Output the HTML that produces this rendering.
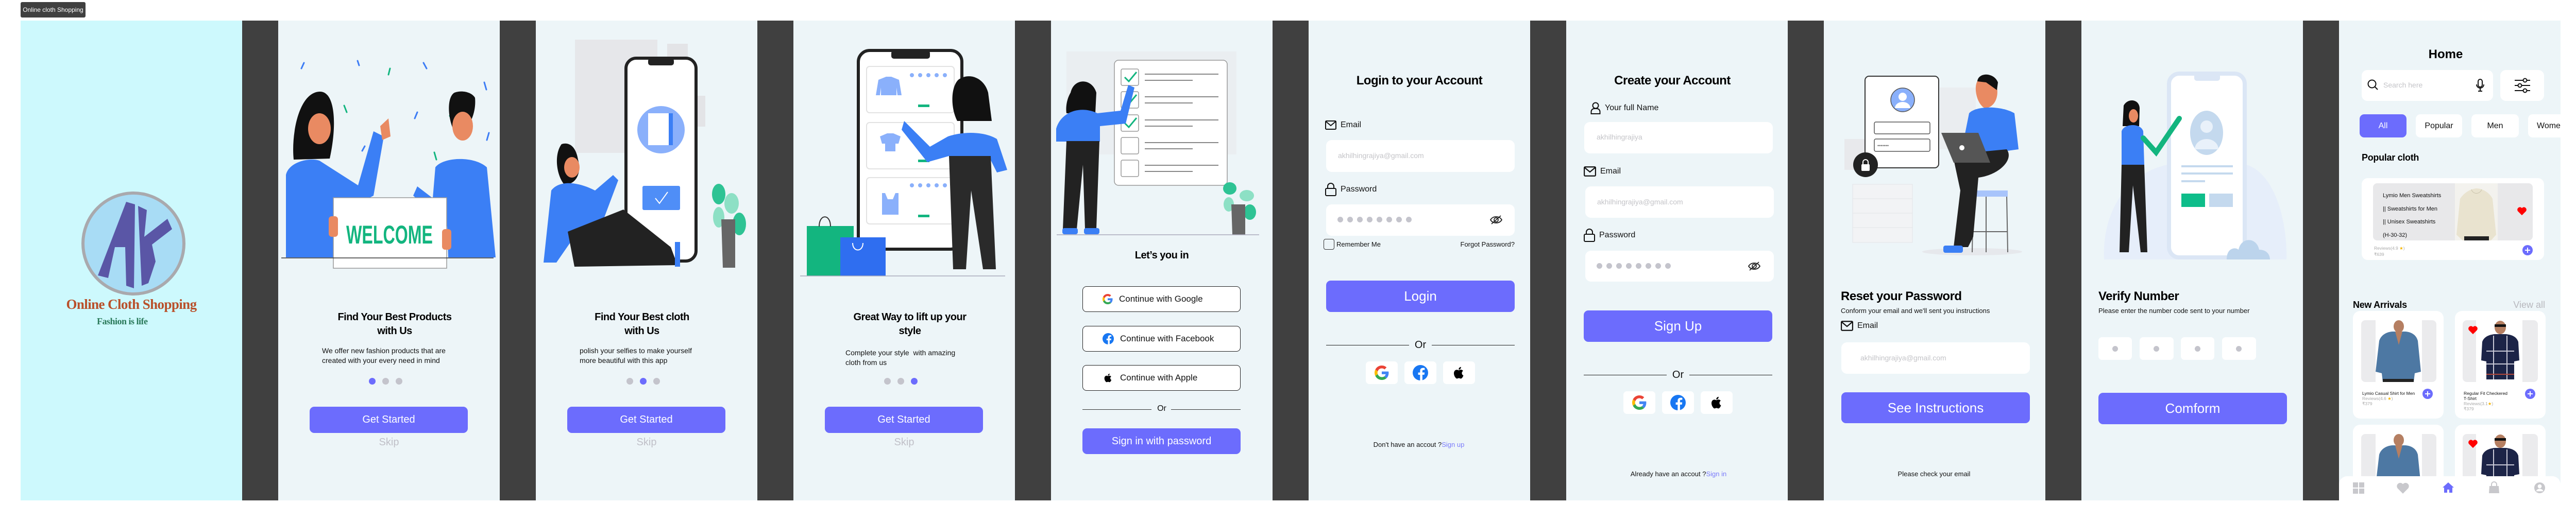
<!DOCTYPE html>
<html><head><meta charset="utf-8">
<style>
*{margin:0;padding:0;box-sizing:border-box}
body{width:5010px;height:1012px;background:#fff;position:relative;overflow:hidden;font-family:"Liberation Sans",sans-serif;color:#111}
.strip{position:absolute;left:40px;top:40px;width:4930px;height:932px;background:#404040}
.p{position:absolute;top:40px;width:430px;height:932px;background:#edf5f8;overflow:hidden}
.a{position:absolute}
.t{font-weight:bold;letter-spacing:-0.5px;color:#000}
.c{text-align:center}
.btn{position:absolute;background:#6c6cfd;color:#fff;border-radius:9px;text-align:center}
.inp{position:absolute;background:#fff;border-radius:11px}
.ph{position:absolute;color:#c4c4c8;font-size:14px}
.dot{position:absolute;width:13px;height:13px;border-radius:50%;background:#c4c4cc}
.soc{position:absolute;background:#fff;border-radius:7px;display:flex;align-items:center;justify-content:center}
.ob{position:absolute;left:61px;width:307px;height:50px;background:#fff;border:1.5px solid #222;border-radius:8px;display:flex;align-items:center;padding-left:38px;font-size:17px;color:#111}
.ob svg{margin-right:12px}
.lbl{position:absolute;font-size:16px;color:#111;display:flex;align-items:center}
.lbl svg{margin-right:8px}
.pw{position:absolute;width:11px;height:11px;border-radius:50%;background:#c4c4cc}
</style></head><body>
<div class="a" style="left:40px;top:4px;width:126px;height:30px;background:#404040;border-radius:3px;color:#fff;font-size:12px;line-height:30px;text-align:center">Online cloth Shopping</div>
<div class="strip"></div>

<!-- Panel 1 -->
<div class="p" style="left:40px;background:#cdf9fd">
<svg class="a" style="left:0;top:0" width="430" height="932">
<circle cx="219" cy="433" r="98" fill="#a8dcf5" stroke="#a9a9ad" stroke-width="6"/>
<polygon points="150,495 205,352 222,357 220,520 205,515 203,440 183,440 170,500" fill="#5a56a6"/>
<polygon points="228,360 245,368 240,420 285,385 294,405 255,435 262,468 248,510 235,515" fill="#5a56a6"/>
</svg>
<div class="a c" style="left:0;width:430px;top:536px;font-family:'Liberation Serif',serif;font-weight:bold;font-size:27px;color:#b9502a;letter-spacing:-0.6px">Online Cloth Shopping</div>
<div class="a" style="left:148px;top:574px;font-family:'Liberation Serif',serif;font-weight:bold;font-size:18px;color:#2a7a5a;letter-spacing:-0.5px">Fashion is life</div>
</div>

<!-- Panel 2 -->
<div class="p" style="left:540px">
<svg class="a" style="left:0;top:0" width="430" height="932">
<g stroke-width="3" stroke-linecap="round">
<line x1="45" y1="93" x2="50" y2="82" stroke="#3c7cf5"/><line x1="154" y1="78" x2="157" y2="87" stroke="#3c7cf5"/><line x1="214" y1="105" x2="217" y2="93" stroke="#12b57f"/><line x1="282" y1="82" x2="288" y2="93" stroke="#3c7cf5"/><line x1="400" y1="120" x2="404" y2="134" stroke="#3c7cf5"/><line x1="128" y1="165" x2="133" y2="178" stroke="#12b57f"/><line x1="265" y1="190" x2="270" y2="178" stroke="#3c7cf5"/><line x1="333" y1="185" x2="338" y2="193" stroke="#12b57f"/><line x1="405" y1="232" x2="409" y2="218" stroke="#3c7cf5"/><line x1="163" y1="253" x2="168" y2="244" stroke="#3c7cf5"/><line x1="303" y1="256" x2="307" y2="270" stroke="#12b57f"/>
</g>
<path d="M30,270 C25,220 40,140 80,138 C110,136 115,200 100,268 Z" fill="#111"/>
<ellipse cx="80" cy="210" rx="22" ry="30" fill="#e98a62"/>
<path d="M15,300 C20,275 60,265 80,272 L155,320 L185,215 L205,225 L185,340 L110,380 L107,460 L15,460 Z" fill="#3b7ff5"/>
<path d="M198,205 L214,190 L218,225 L202,232 Z" fill="#e98a62"/>
<path d="M342,140 C325,150 330,200 345,220 C370,215 385,180 382,150 C375,138 355,135 342,140 Z" fill="#111"/>
<ellipse cx="358" cy="205" rx="20" ry="28" fill="#e98a62"/>
<path d="M305,285 C320,265 380,262 405,285 L422,460 L330,460 L328,400 L262,340 L270,322 L300,345 Z" fill="#3b7ff5"/>
<rect x="107" y="344" width="220" height="137" fill="#fff" stroke="#999" stroke-width="1.5"/>
<line x1="6" y1="461" x2="418" y2="461" stroke="#333" stroke-width="1.5"/>
<text x="132" y="433" font-family="Liberation Sans Narrow,Liberation Sans,sans-serif" font-weight="bold" font-size="50" fill="#13b57f" textLength="168" lengthAdjust="spacingAndGlyphs">WELCOME</text>
<rect x="98" y="380" width="18" height="40" rx="6" fill="#e98a62"/><rect x="318" y="405" width="18" height="40" rx="6" fill="#e98a62"/>
</svg>
<div class="a t c" style="left:0;width:452px;top:563px;font-size:20px;line-height:27px">Find Your Best Products<br>with Us</div>
<div class="a" style="left:85px;top:632px;font-size:14px;line-height:19px">We offer new fashion products that are<br>created with your every need in mind</div>
<div class="dot" style="left:176px;top:694px;background:#6c6cfd"></div><div class="dot" style="left:202px;top:694px"></div><div class="dot" style="left:228px;top:694px"></div>
<div class="btn" style="left:61px;top:750px;width:307px;height:51px;font-size:20px;line-height:51px">Get Started</div>
<div class="a c" style="left:0;width:430px;top:808px;font-size:20px;color:#c0c0c8">Skip</div>
</div>

<!-- Panel 3 -->
<div class="p" style="left:1040px">
<svg class="a" style="left:0;top:0" width="430" height="932">
<rect x="76" y="37" width="160" height="220" fill="#e6e7ea"/><rect x="255" y="45" width="40" height="95" fill="#e3e4e7"/><rect x="293" y="146" width="36" height="60" fill="#e3e4e7"/>
<rect x="175" y="73" width="136" height="394" rx="20" fill="#fff" stroke="#222" stroke-width="6"/>
<rect x="218" y="73" width="50" height="14" rx="5" fill="#222"/>
<circle cx="243" cy="212" r="46" fill="#8ab0fb"/>
<rect x="218" y="180" width="48" height="62" fill="#fff"/><rect x="258" y="180" width="8" height="62" fill="#3b7ff5"/>
<rect x="207" y="321" width="73" height="47" rx="3" fill="#4f8ef7"/><path d="M232,345 l8,10 l16,-22" stroke="#fff" stroke-width="2" fill="none"/>
<path d="M50,240 C35,260 40,300 55,318 C75,320 90,300 82,270 C78,245 65,235 50,240Z" fill="#111"/>
<ellipse cx="70" cy="285" rx="15" ry="20" fill="#e98a62"/>
<path d="M30,330 C45,310 80,312 115,330 L150,300 L160,310 L130,390 L85,405 L40,470 L15,470 Z" fill="#3b7ff5"/>
<path d="M62,410 L170,367 L262,440 L275,475 L75,478 Z" fill="#222"/>
<rect x="270" y="430" width="10" height="48" fill="#3b7ff5"/>
<ellipse cx="355" cy="337" rx="13" ry="20" fill="#2ec394"/><ellipse cx="380" cy="355" rx="14" ry="20" fill="#8de0c5"/><ellipse cx="395" cy="395" rx="13" ry="22" fill="#2ec394"/><ellipse cx="355" cy="382" rx="11" ry="20" fill="#8de0c5"/>
<path d="M360,386 L387,386 L387,480 L363,480 Z" fill="#666"/>
</svg>
<div class="a t c" style="left:0;width:412px;top:563px;font-size:20px;line-height:27px">Find Your Best cloth<br>with Us</div>
<div class="a" style="left:85px;top:632px;font-size:14px;line-height:19px">polish your selfies to make yourself<br>more beautiful with this app</div>
<div class="dot" style="left:176px;top:694px"></div><div class="dot" style="left:202px;top:694px;background:#6c6cfd"></div><div class="dot" style="left:228px;top:694px"></div>
<div class="btn" style="left:61px;top:750px;width:307px;height:51px;font-size:20px;line-height:51px">Get Started</div>
<div class="a c" style="left:0;width:430px;top:808px;font-size:20px;color:#c0c0c8">Skip</div>
</div>

<!-- Panel 4 -->
<div class="p" style="left:1540px">
<svg class="a" style="left:0;top:0" width="430" height="932">
<rect x="126" y="58" width="201" height="386" rx="22" fill="#fff" stroke="#222" stroke-width="6"/>
<rect x="190" y="58" width="75" height="16" rx="5" fill="#222"/>
<g fill="#fff" stroke="#e2e2e2" stroke-width="2"><rect x="142" y="89" width="170" height="90" rx="6"/><rect x="142" y="198" width="170" height="90" rx="6"/><rect x="142" y="305" width="170" height="90" rx="6"/></g>
<g fill="#8ab0fb"><path d="M165,115 l15,-6 h10 l15,6 l5,30 h-8 l-2,-15 v15 h-30 v-15 l-2,15 h-8z"/><path d="M168,225 l14,-6 h12 l14,6 l-4,14 h-6 v15 h-20 v-15 h-6z"/><path d="M172,335 h6 l5,12 h10 l5,-12 h6 v42 h-32z"/>
<circle cx="230" cy="106" r="4"/><circle cx="246" cy="106" r="4"/><circle cx="262" cy="106" r="4"/><circle cx="278" cy="106" r="4"/><circle cx="294" cy="106" r="4"/>
<circle cx="230" cy="320" r="4"/><circle cx="246" cy="320" r="4"/><circle cx="262" cy="320" r="4"/><circle cx="278" cy="320" r="4"/><circle cx="294" cy="320" r="4"/></g>
<g fill="#13b57f"><rect x="242" y="163" width="22" height="5"/><rect x="242" y="270" width="22" height="5"/><rect x="242" y="377" width="22" height="5"/></g>
<path d="M320,115 C340,100 370,110 378,140 L385,195 L318,195 C305,170 305,130 320,115Z" fill="#111"/>
<path d="M210,212 L215,195 L265,245 L300,225 C330,215 370,215 395,230 L415,290 L395,295 L380,265 L383,263 L302,263 L260,275 Z" fill="#3b7ff5"/>
<path d="M302,263 L383,263 L393,483 L368,483 L345,330 L335,483 L310,483 Z" fill="#2a2a2a"/>
<rect x="26" y="399" width="91" height="97" fill="#13b57f"/><rect x="91" y="421" width="88" height="75" fill="#2f6ef0"/>
<path d="M50,400 C50,375 72,375 72,400" stroke="#333" stroke-width="2" fill="none"/><path d="M115,432 C115,450 135,450 135,432" stroke="#fff" stroke-width="2" fill="none"/>
<line x1="13" y1="496" x2="411" y2="496" stroke="#aab" stroke-width="1.5"/>
</svg>
<div class="a t c" style="left:0;width:452px;top:563px;font-size:20px;line-height:27px">Great Way to lift up your<br>style</div>
<div class="a" style="left:101px;top:636px;font-size:14px;line-height:19px">Complete your style&nbsp; with amazing<br>cloth from us</div>
<div class="dot" style="left:176px;top:694px"></div><div class="dot" style="left:202px;top:694px"></div><div class="dot" style="left:228px;top:694px;background:#6c6cfd"></div>
<div class="btn" style="left:61px;top:750px;width:307px;height:51px;font-size:20px;line-height:51px">Get Started</div>
<div class="a c" style="left:0;width:430px;top:808px;font-size:20px;color:#c0c0c8">Skip</div>
</div>

<!-- Panel 5 -->
<div class="p" style="left:2040px">
<svg class="a" style="left:0;top:0" width="430" height="932">
<rect x="30" y="60" width="330" height="200" fill="#e8e9ec" opacity=".6"/>
<rect x="123" y="77" width="219" height="243" rx="8" fill="#fff" stroke="#999" stroke-width="1.5"/>
<g fill="#fff" stroke="#999" stroke-width="1.5"><rect x="136" y="94" width="34" height="32" rx="3"/><rect x="136" y="138" width="34" height="32" rx="3"/><rect x="136" y="183" width="34" height="32" rx="3"/><rect x="136" y="227" width="34" height="32" rx="3"/><rect x="136" y="271" width="34" height="32" rx="3"/></g>
<g stroke="#888" stroke-width="2"><line x1="182" y1="104" x2="325" y2="104"/><line x1="182" y1="116" x2="275" y2="116"/><line x1="182" y1="148" x2="325" y2="148"/><line x1="182" y1="160" x2="275" y2="160"/><line x1="182" y1="193" x2="325" y2="193"/><line x1="182" y1="205" x2="275" y2="205"/><line x1="182" y1="237" x2="325" y2="237"/><line x1="182" y1="249" x2="275" y2="249"/><line x1="182" y1="281" x2="325" y2="281"/><line x1="182" y1="293" x2="275" y2="293"/></g>
<g stroke="#13b57f" stroke-width="3" fill="none"><path d="M143,110 l8,8 l15,-18"/><path d="M143,154 l8,8 l15,-18"/><path d="M143,199 l8,8 l15,-18"/></g>
<path d="M38,140 C45,110 80,112 88,140 L86,180 L30,180 C28,165 32,150 38,140Z" fill="#111"/>
<path d="M10,210 C20,175 60,165 90,180 L135,175 L150,125 L162,130 L145,200 L95,205 L95,235 L10,235 Z" fill="#3b7ff5"/>
<path d="M30,234 L94,234 L88,405 L66,405 L62,280 L50,405 L23,405 Z" fill="#222"/>
<rect x="22" y="403" width="30" height="12" rx="4" fill="#3b7ff5"/><rect x="64" y="403" width="30" height="12" rx="4" fill="#3b7ff5"/>
<ellipse cx="347" cy="326" rx="13" ry="12" fill="#2ec394"/><ellipse cx="380" cy="340" rx="14" ry="11" fill="#8de0c5"/><ellipse cx="386" cy="372" rx="12" ry="15" fill="#2ec394"/><ellipse cx="345" cy="357" rx="10" ry="14" fill="#8de0c5"/>
<path d="M350,357 L377,357 L377,416 L352,416 Z" fill="#666"/>
<line x1="11" y1="416" x2="404" y2="416" stroke="#aab" stroke-width="1.5"/>
</svg>
<div class="a t c" style="left:0;width:430px;top:445px;font-size:20px">Let’s you in</div>
<div class="ob" style="top:516px"><svg width="20" height="20" viewBox="0 0 48 48"><path fill="#EA4335" d="M24 9.5c3.54 0 6.71 1.22 9.21 3.6l6.85-6.85C35.9 2.38 30.47 0 24 0 14.62 0 6.51 5.38 2.56 13.22l7.98 6.19C12.43 13.72 17.74 9.5 24 9.5z"/><path fill="#4285F4" d="M46.98 24.55c0-1.57-.15-3.09-.38-4.55H24v9.02h12.94c-.58 2.96-2.26 5.48-4.78 7.18l7.73 6c4.51-4.18 7.09-10.36 7.09-17.65z"/><path fill="#FBBC05" d="M10.53 28.59c-.48-1.450-.76-2.99-.76-4.59s.27-3.14.76-4.59l-7.98-6.19C.92 16.46 0 20.12 0 24c0 3.88.92 7.54 2.56 10.78l7.97-6.19z"/><path fill="#34A853" d="M24 48c6.48 0 11.93-2.13 15.89-5.81l-7.73-6c-2.15 1.45-4.92 2.3-8.16 2.3-6.26 0-11.57-4.22-13.47-9.91l-7.98 6.19C6.51 42.62 14.62 48 24 48z"/></svg>Continue with Google</div>
<div class="ob" style="top:593px"><svg width="22" height="22" viewBox="0 0 24 24"><circle cx="12" cy="12" r="12" fill="#1877f2"/><path fill="#fff" d="M15.1 24v-8.9h3l.45-3.5H15.1V9.4c0-1 .28-1.7 1.73-1.7h1.85V4.6c-.32-.04-1.42-.14-2.7-.14-2.67 0-4.5 1.63-4.5 4.63v2.58H8.46v3.5h3.02V24z"/></svg>Continue with Facebook</div>
<div class="ob" style="top:669px"><svg width="22" height="22" viewBox="0 0 24 24"><path fill="#000" d="M16.37 12.6c-.02-2.3 1.88-3.4 1.96-3.46-1.07-1.56-2.73-1.78-3.32-1.8-1.41-.14-2.76.83-3.48.83-.72 0-1.83-.81-3-.79-1.55.02-2.97.9-3.77 2.28-1.6 2.78-.41 6.9 1.15 9.16.76 1.1 1.67 2.34 2.87 2.3 1.15-.05 1.58-.75 2.97-.75 1.39 0 1.78.75 3 .72 1.24-.02 2.02-1.12 2.78-2.23.87-1.28 1.23-2.52 1.25-2.58-.03-.01-2.4-.92-2.41-3.68zM14.1 5.85c.63-.77 1.06-1.83.94-2.89-.91.04-2.02.61-2.67 1.37-.58.68-1.1 1.77-.96 2.81 1.02.08 2.06-.52 2.69-1.29z"/></svg>Continue with Apple</div>
<div class="a" style="left:61px;top:755px;width:134px;border-top:1px solid #333"></div><div class="a" style="left:233px;top:755px;width:135px;border-top:1px solid #333"></div>
<div class="a c" style="left:0;width:430px;top:745px;font-size:16px">Or</div>
<div class="btn" style="left:61px;top:792px;width:307px;height:50px;font-size:20px;line-height:50px">Sign in with password</div>
</div>

<!-- Panel 6 -->
<div class="p" style="left:2540px">
<div class="a t c" style="left:0;width:430px;top:103px;font-size:24px">Login to your Account</div>
<div class="lbl" style="left:32px;top:193px"><svg width="22" height="20" viewBox="0 0 22 20"><rect x="1" y="2" width="20" height="16" rx="1.5" fill="none" stroke="#111" stroke-width="2"/><path d="M1.5 3 L11 11 L20.5 3" fill="none" stroke="#111" stroke-width="2"/></svg>Email</div>
<div class="inp" style="left:34px;top:232px;width:366px;height:62px"></div><div class="ph" style="left:57px;top:254px">akhilhingrajiya@gmail.com</div>
<div class="lbl" style="left:32px;top:315px"><svg width="22" height="26" viewBox="0 0 22 26"><path d="M5 11 V7 a6 6 0 0 1 12 0 V11" fill="none" stroke="#111" stroke-width="2"/><rect x="1" y="11" width="20" height="14" rx="2" fill="none" stroke="#111" stroke-width="2"/></svg>Password</div>
<div class="inp" style="left:34px;top:357px;width:366px;height:61px"></div>
<div class="pw" style="left:56px;top:381px"></div><div class="pw" style="left:75px;top:381px"></div><div class="pw" style="left:94px;top:381px"></div><div class="pw" style="left:113px;top:381px"></div><div class="pw" style="left:132px;top:381px"></div><div class="pw" style="left:151px;top:381px"></div><div class="pw" style="left:170px;top:381px"></div><div class="pw" style="left:189px;top:381px"></div>
<svg class="a" style="left:351px;top:377px" width="26" height="20" viewBox="0 0 26 20"><path d="M2 10 C7 2 19 2 24 10 C19 18 7 18 2 10Z" fill="none" stroke="#222" stroke-width="1.8"/><circle cx="13" cy="10" r="4" fill="none" stroke="#222" stroke-width="1.8"/><line x1="4" y1="18" x2="22" y2="2" stroke="#222" stroke-width="1.8"/></svg>
<div class="a" style="left:29px;top:424px;width:21px;height:21px;border:1.5px solid #333;border-radius:4px"></div>
<div class="a" style="left:54px;top:427px;font-size:13px">Remember Me</div>
<div class="a" style="left:290px;top:427px;width:110px;text-align:right;font-size:13px">Forgot Password?</div>
<div class="btn" style="left:34px;top:505px;width:366px;height:61px;font-size:26px;line-height:61px">Login</div>
<div class="a" style="left:34px;top:630px;width:161px;border-top:1.5px solid #222"></div><div class="a" style="left:239px;top:630px;width:161px;border-top:1.5px solid #222"></div>
<div class="a c" style="left:0;width:434px;top:619px;font-size:20px">Or</div>
<div class="soc" style="left:111px;top:662px;width:62px;height:44px"><svg width="28" height="28" viewBox="0 0 48 48"><path fill="#EA4335" d="M24 9.5c3.54 0 6.71 1.22 9.21 3.6l6.85-6.85C35.9 2.38 30.47 0 24 0 14.62 0 6.51 5.38 2.56 13.22l7.98 6.19C12.43 13.72 17.74 9.5 24 9.5z"/><path fill="#4285F4" d="M46.98 24.55c0-1.57-.15-3.09-.38-4.55H24v9.02h12.94c-.58 2.96-2.26 5.48-4.78 7.18l7.73 6c4.51-4.18 7.09-10.36 7.09-17.65z"/><path fill="#FBBC05" d="M10.53 28.59c-.48-1.45-.76-2.99-.76-4.59s.27-3.14.76-4.59l-7.98-6.19C.92 16.46 0 20.12 0 24c0 3.88.92 7.54 2.56 10.78l7.97-6.19z"/><path fill="#34A853" d="M24 48c6.48 0 11.93-2.13 15.89-5.81l-7.73-6c-2.15 1.45-4.92 2.3-8.16 2.3-6.26 0-11.57-4.22-13.47-9.91l-7.98 6.19C6.51 42.62 14.62 48 24 48z"/></svg></div>
<div class="soc" style="left:186px;top:662px;width:62px;height:44px"><svg width="30" height="30" viewBox="0 0 24 24"><circle cx="12" cy="12" r="12" fill="#1877f2"/><path fill="#fff" d="M15.1 24v-8.9h3l.45-3.5H15.1V9.4c0-1 .28-1.7 1.73-1.7h1.85V4.6c-.32-.04-1.42-.14-2.7-.14-2.67 0-4.5 1.63-4.5 4.63v2.58H8.46v3.5h3.02V24z"/></svg></div>
<div class="soc" style="left:261px;top:662px;width:62px;height:44px"><svg width="30" height="30" viewBox="0 0 24 24"><path fill="#000" d="M16.37 12.6c-.02-2.3 1.88-3.4 1.96-3.46-1.07-1.56-2.73-1.78-3.32-1.8-1.41-.14-2.76.83-3.48.83-.72 0-1.83-.81-3-.79-1.55.02-2.97.9-3.77 2.28-1.6 2.78-.41 6.9 1.15 9.16.76 1.1 1.67 2.34 2.87 2.3 1.15-.05 1.58-.75 2.97-.75 1.39 0 1.78.75 3 .72 1.24-.02 2.02-1.12 2.78-2.23.87-1.28 1.23-2.52 1.25-2.58-.03-.01-2.4-.92-2.41-3.68zM14.1 5.85c.63-.77 1.06-1.83.94-2.89-.91.04-2.02.61-2.67 1.37-.58.68-1.1 1.77-.96 2.81 1.02.08 2.06-.52 2.69-1.29z"/></svg></div>
<div class="a c" style="left:0;width:428px;top:816px;font-size:13px">Don't have an accout ?<span style="color:#7b7bfb">Sign up</span></div>
</div>

<!-- Panel 7 -->
<div class="p" style="left:3040px">
<div class="a t c" style="left:0;width:412px;top:103px;font-size:24px">Create your Account</div>
<div class="lbl" style="left:47px;top:158px"><svg width="20" height="24" viewBox="0 0 20 24"><circle cx="10" cy="7" r="5.5" fill="none" stroke="#111" stroke-width="2"/><path d="M1.5 23 V19 a6 6 0 0 1 6 -6 h5 a6 6 0 0 1 6 6 V23 Z" fill="none" stroke="#111" stroke-width="2"/></svg>Your full Name</div>
<div class="inp" style="left:35px;top:197px;width:366px;height:61px"></div><div class="ph" style="left:59px;top:218px">akhilhingrajiya</div>
<div class="lbl" style="left:34px;top:282px"><svg width="24" height="22" viewBox="0 0 22 20"><rect x="1" y="2" width="20" height="16" rx="1.5" fill="none" stroke="#111" stroke-width="2"/><path d="M1.5 3 L11 11 L20.5 3" fill="none" stroke="#111" stroke-width="2"/></svg>Email</div>
<div class="inp" style="left:37px;top:322px;width:366px;height:61px"></div><div class="ph" style="left:60px;top:344px">akhilhingrajiya@gmail.com</div>
<div class="lbl" style="left:34px;top:404px"><svg width="22" height="26" viewBox="0 0 22 26"><path d="M5 11 V7 a6 6 0 0 1 12 0 V11" fill="none" stroke="#111" stroke-width="2"/><rect x="1" y="11" width="20" height="14" rx="2" fill="none" stroke="#111" stroke-width="2"/></svg>Password</div>
<div class="inp" style="left:37px;top:447px;width:366px;height:60px"></div>
<div class="pw" style="left:59px;top:471px"></div><div class="pw" style="left:78px;top:471px"></div><div class="pw" style="left:97px;top:471px"></div><div class="pw" style="left:116px;top:471px"></div><div class="pw" style="left:135px;top:471px"></div><div class="pw" style="left:154px;top:471px"></div><div class="pw" style="left:173px;top:471px"></div><div class="pw" style="left:192px;top:471px"></div>
<svg class="a" style="left:352px;top:467px" width="26" height="20" viewBox="0 0 26 20"><path d="M2 10 C7 2 19 2 24 10 C19 18 7 18 2 10Z" fill="none" stroke="#222" stroke-width="1.8"/><circle cx="13" cy="10" r="4" fill="none" stroke="#222" stroke-width="1.8"/><line x1="4" y1="18" x2="22" y2="2" stroke="#222" stroke-width="1.8"/></svg>
<div class="btn" style="left:34px;top:563px;width:366px;height:61px;font-size:26px;line-height:61px">Sign Up</div>
<div class="a" style="left:34px;top:688px;width:161px;border-top:1.5px solid #222"></div><div class="a" style="left:239px;top:688px;width:161px;border-top:1.5px solid #222"></div>
<div class="a c" style="left:0;width:434px;top:677px;font-size:20px">Or</div>
<div class="soc" style="left:111px;top:720px;width:62px;height:44px"><svg width="28" height="28" viewBox="0 0 48 48"><path fill="#EA4335" d="M24 9.5c3.54 0 6.71 1.22 9.21 3.6l6.85-6.85C35.9 2.38 30.47 0 24 0 14.62 0 6.51 5.38 2.56 13.22l7.98 6.19C12.43 13.72 17.74 9.5 24 9.5z"/><path fill="#4285F4" d="M46.98 24.55c0-1.57-.15-3.09-.38-4.55H24v9.02h12.94c-.58 2.96-2.26 5.48-4.78 7.18l7.73 6c4.51-4.18 7.09-10.36 7.09-17.65z"/><path fill="#FBBC05" d="M10.53 28.59c-.48-1.45-.76-2.99-.76-4.59s.27-3.14.76-4.59l-7.98-6.19C.92 16.46 0 20.12 0 24c0 3.88.92 7.54 2.56 10.78l7.97-6.19z"/><path fill="#34A853" d="M24 48c6.48 0 11.93-2.13 15.89-5.81l-7.73-6c-2.15 1.45-4.92 2.3-8.16 2.3-6.26 0-11.57-4.22-13.47-9.91l-7.98 6.19C6.51 42.62 14.62 48 24 48z"/></svg></div>
<div class="soc" style="left:186px;top:720px;width:62px;height:44px"><svg width="30" height="30" viewBox="0 0 24 24"><circle cx="12" cy="12" r="12" fill="#1877f2"/><path fill="#fff" d="M15.1 24v-8.9h3l.45-3.5H15.1V9.4c0-1 .28-1.7 1.73-1.7h1.85V4.6c-.32-.04-1.42-.14-2.7-.14-2.67 0-4.5 1.63-4.5 4.63v2.58H8.46v3.5h3.02V24z"/></svg></div>
<div class="soc" style="left:261px;top:720px;width:62px;height:44px"><svg width="30" height="30" viewBox="0 0 24 24"><path fill="#000" d="M16.37 12.6c-.02-2.3 1.88-3.4 1.96-3.46-1.07-1.56-2.73-1.78-3.32-1.8-1.41-.14-2.76.83-3.48.83-.72 0-1.83-.81-3-.79-1.55.02-2.97.9-3.77 2.28-1.6 2.78-.41 6.9 1.15 9.16.76 1.1 1.67 2.34 2.87 2.3 1.15-.05 1.58-.75 2.97-.75 1.39 0 1.78.75 3 .72 1.24-.02 2.02-1.12 2.78-2.23.87-1.28 1.23-2.52 1.25-2.58-.03-.01-2.4-.92-2.41-3.68zM14.1 5.85c.63-.77 1.06-1.83.94-2.89-.91.04-2.02.61-2.67 1.37-.58.68-1.1 1.77-.96 2.81 1.02.08 2.06-.52 2.69-1.29z"/></svg></div>
<div class="a c" style="left:0;width:436px;top:873px;font-size:13px">Already have an accout ?<span style="color:#7b7bfb">Sign in</span></div>
</div>

<!-- Panel 8 -->
<div class="p" style="left:3540px">
<svg class="a" style="left:0;top:0" width="430" height="932">
<rect x="40" y="230" width="40" height="60" fill="#e8e9ec"/><rect x="225" y="130" width="70" height="120" fill="#e8e9ec" opacity=".7"/>
<g fill="#f2f3f5" stroke="#e3e4e7"><rect x="56" y="318" width="116" height="28"/><rect x="56" y="346" width="116" height="28"/><rect x="56" y="374" width="116" height="28"/><rect x="56" y="402" width="116" height="29"/></g>
<rect x="80" y="108" width="143" height="178" rx="8" fill="#fff" stroke="#333" stroke-width="2"/>
<circle cx="153" cy="154" r="23" fill="#8ab0fb" stroke="#555" stroke-width="1.5"/><circle cx="153" cy="148" r="8" fill="#fff"/><path d="M138,170 a15,12 0 0 1 30,0" fill="#fff"/>
<rect x="98" y="197" width="108" height="23" rx="3" fill="#fff" stroke="#555" stroke-width="1.5"/><rect x="98" y="230" width="108" height="24" rx="3" fill="#fff" stroke="#555" stroke-width="1.5"/>
<text x="104" y="246" font-size="9" fill="#666" font-family="Liberation Sans">•••••••</text>
<circle cx="81" cy="280" r="24" fill="#222"/><rect x="73" y="279" width="16" height="13" rx="2" fill="#fff"/><path d="M76,279 v-4 a5,5 0 0 1 10,0 v4" stroke="#fff" stroke-width="2" fill="none"/>
<ellipse cx="288" cy="449" rx="97" ry="7" fill="#e6e8ec"/>
<g stroke="#666" stroke-width="2"><line x1="290" y1="340" x2="288" y2="450"/><line x1="315" y1="340" x2="315" y2="450"/><line x1="355" y1="340" x2="357" y2="450"/><line x1="290" y1="410" x2="357" y2="410"/></g>
<rect x="287" y="330" width="70" height="12" fill="#a8c4fb"/>
<path d="M300,115 C290,125 295,160 312,170 C330,170 340,150 336,130 C330,112 312,108 300,115Z" fill="#e98a62"/>
<path d="M298,118 C300,100 330,100 338,120 L336,135 L315,120 Z" fill="#111"/>
<path d="M282,180 C295,165 345,165 370,180 L378,250 L320,258 L300,250 L272,230 Z" fill="#3b7ff5"/>
<path d="M250,260 L355,250 C370,270 340,300 300,305 L290,420 L280,440 L252,440 L265,330 Z" fill="#222"/>
<path d="M228,218 L300,218 L323,276 L252,276 Z" fill="#555"/><circle cx="268" cy="247" r="5" fill="#fff"/>
<rect x="232" y="437" width="38" height="14" rx="4" fill="#3b7ff5"/>
</svg>
<div class="a t" style="left:33px;top:522px;font-size:24px">Reset your Password</div>
<div class="a" style="left:33px;top:556px;font-size:13px">Conform your email and we'll sent you instructions</div>
<div class="lbl" style="left:33px;top:582px"><svg width="24" height="22" viewBox="0 0 22 20"><rect x="1" y="2" width="20" height="16" rx="1.5" fill="none" stroke="#111" stroke-width="2"/><path d="M1.5 3 L11 11 L20.5 3" fill="none" stroke="#111" stroke-width="2"/></svg>Email</div>
<div class="inp" style="left:34px;top:625px;width:366px;height:61px"></div><div class="ph" style="left:71px;top:647px">akhilhingrajiya@gmail.com</div>
<div class="btn" style="left:34px;top:722px;width:366px;height:60px;font-size:26px;line-height:60px">See Instructions</div>
<div class="a c" style="left:0;width:428px;top:873px;font-size:13px">Please check your email</div>
</div>

<!-- Panel 9 -->
<div class="p" style="left:4040px">
<svg class="a" style="left:0;top:0" width="430" height="932">
<path d="M44,464 C40,380 80,300 166,280 L321,280 C380,300 400,400 398,464 Z" fill="#e6eefa"/>
<rect x="170" y="103" width="147" height="357" rx="20" fill="#fff" stroke="#dbe6f5" stroke-width="8"/>
<rect x="219" y="103" width="50" height="14" rx="5" fill="#dbe6f5"/>
<ellipse cx="243" cy="218" rx="32" ry="43" fill="#c4d9ee"/><circle cx="243" cy="206" r="12" fill="#e9f1fa"/><path d="M220,250 a23,20 0 0 1 46,0" fill="#e9f1fa"/>
<g stroke="#c4d9ee" stroke-width="4"><line x1="194" y1="283" x2="294" y2="283"/><line x1="194" y1="297" x2="294" y2="297"/><line x1="194" y1="312" x2="240" y2="312"/></g>
<rect x="194" y="336" width="46" height="26" fill="#0ebd8a"/><rect x="248" y="336" width="46" height="26" fill="#c4d9ee"/>
<path d="M282,464 C282,440 300,440 305,445 C310,420 340,420 345,445 C360,445 366,455 366,464 Z" fill="#bcd4ec"/>
<path d="M82,165 C90,150 112,152 113,170 L112,205 L80,205 Z" fill="#111"/><ellipse cx="101" cy="185" rx="9" ry="13" fill="#e98a62"/>
<path d="M78,215 C82,200 115,198 120,215 L122,280 L78,280 Z" fill="#3b7ff5"/>
<path d="M78,280 L122,280 L128,450 L115,450 L100,320 L92,450 L74,450 Z" fill="#222"/>
<path d="M120,228 L145,256 L190,190" stroke="#13b57f" stroke-width="10" fill="none" stroke-linecap="round"/>
</svg>
<div class="a t" style="left:33px;top:522px;font-size:24px">Verify Number</div>
<div class="a" style="left:33px;top:556px;font-size:13px">Please enter the number code sent to your number</div>
<div class="inp" style="left:33px;top:615px;width:65px;height:44px;border-radius:7px"></div><div class="inp" style="left:113px;top:615px;width:66px;height:44px;border-radius:7px"></div><div class="inp" style="left:193px;top:615px;width:65px;height:44px;border-radius:7px"></div><div class="inp" style="left:273px;top:615px;width:66px;height:44px;border-radius:7px"></div>
<div class="pw" style="left:60px;top:632px"></div><div class="pw" style="left:140px;top:632px"></div><div class="pw" style="left:220px;top:632px"></div><div class="pw" style="left:300px;top:632px"></div>
<div class="btn" style="left:33px;top:723px;width:366px;height:61px;font-size:26px;line-height:61px">Comform</div>
</div>

<!-- Panel 10 -->
<div class="p" style="left:4540px">
<div class="a t c" style="left:0;width:414px;top:52px;font-size:24px;letter-spacing:0">Home</div>
<div class="inp" style="left:44px;top:96px;width:255px;height:60px"></div>
<svg class="a" style="left:55px;top:114px" width="22" height="22" viewBox="0 0 22 22"><circle cx="9" cy="9" r="7.5" fill="none" stroke="#111" stroke-width="2"/><line x1="14.5" y1="14.5" x2="20" y2="20" stroke="#111" stroke-width="2"/></svg>
<div class="a" style="left:86px;top:117px;font-size:14px;color:#c4c4c8">Search here</div>
<svg class="a" style="left:266px;top:113px" width="16" height="26" viewBox="0 0 16 26"><rect x="4" y="1" width="8" height="15" rx="4" fill="none" stroke="#111" stroke-width="2"/><path d="M1 11 a7 7 0 0 0 14 0 M8 18 V24 M4 24 H12" fill="none" stroke="#111" stroke-width="2"/></svg>
<div class="inp" style="left:313px;top:96px;width:85px;height:60px"></div>
<svg class="a" style="left:340px;top:110px" width="32" height="32" viewBox="0 0 32 32" fill="none" stroke="#111" stroke-width="2"><line x1="1" y1="6" x2="31" y2="6"/><line x1="1" y1="16" x2="31" y2="16"/><line x1="1" y1="26" x2="31" y2="26"/><circle cx="21" cy="6" r="3.5" fill="#fff"/><circle cx="11" cy="16" r="3.5" fill="#fff"/><circle cx="21" cy="26" r="3.5" fill="#fff"/></svg>
<div class="btn" style="left:40px;top:182px;width:91px;height:45px;font-size:16px;line-height:45px">All</div>
<div class="inp" style="left:149px;top:182px;width:90px;height:45px;border-radius:9px;font-size:16px;line-height:45px;text-align:center">Popular</div>
<div class="inp" style="left:257px;top:182px;width:92px;height:45px;border-radius:9px;font-size:16px;line-height:45px;text-align:center">Men</div>
<div class="inp" style="left:367px;top:182px;width:92px;height:45px;border-radius:9px;font-size:16px;line-height:45px;padding-left:17px">Women</div>
<div class="a t" style="left:44px;top:256px;font-size:18px;letter-spacing:-0.3px">Popular cloth</div>
<div class="inp" style="left:44px;top:306px;width:354px;height:159px;border-radius:12px"></div>
<div class="a" style="left:66px;top:316px;width:310px;height:111px;background:#e8e8ea;border-radius:8px"></div>
<div class="a" style="left:85px;top:328px;font-size:11px;line-height:25.7px;color:#111">Lymio Men Sweatshirts<br>|| Sweatshirts for Men<br>|| Unisex Sweatshirts<br>(H-30-32)</div>
<svg class="a" style="left:225px;top:316px" width="83" height="111" viewBox="0 0 83 111"><rect width="83" height="111" fill="#f3f2ee"/><path d="M10,30 C20,15 35,10 42,10 C50,10 65,15 73,30 L80,100 L70,111 H15 L3,100 Z" fill="#e9e3cf"/><path d="M32,12 C35,22 48,22 52,12" stroke="#c9c2ac" fill="none"/><rect x="18" y="103" width="48" height="8" fill="#222"/></svg>
<svg class="a" style="left:345px;top:361px" width="20" height="18" viewBox="0 0 24 22"><path d="M12 21 L2.5 11.5 A5.5 5.5 0 0 1 12 4 A5.5 5.5 0 0 1 21.5 11.5 Z" fill="#f00"/></svg>
<div class="a" style="left:68px;top:436px;font-size:8.5px;color:#aaa;line-height:12px">Reviews(4.9 <span style="color:#f5b400">★</span>)<br>₹639</div>
<svg class="a" style="left:356px;top:436px" width="20" height="20" viewBox="0 0 20 20"><circle cx="10" cy="10" r="10" fill="#6c6cfd"/><path d="M10 5 V15 M5 10 H15" stroke="#fff" stroke-width="2"/></svg>
<div class="a t" style="left:27px;top:542px;font-size:18px;letter-spacing:-0.3px">New Arrivals</div>
<div class="a" style="left:300px;top:542px;width:100px;text-align:right;font-size:18px;color:#b8b8be">View all</div>

<div class="inp" style="left:27px;top:564px;width:176px;height:209px;border-radius:14px"></div>
<div class="inp" style="left:225px;top:564px;width:176px;height:209px;border-radius:14px"></div>
<div class="inp" style="left:27px;top:785px;width:176px;height:150px;border-radius:14px"></div>
<div class="inp" style="left:225px;top:785px;width:176px;height:150px;border-radius:14px"></div>

<svg class="a" style="left:43px;top:582px" width="146" height="120" viewBox="0 0 146 120"><rect width="146" height="120" rx="8" fill="#ebebed"/><rect x="28" width="90" height="120" fill="#fff"/><path d="M35,40 C40,25 55,22 62,22 L84,22 C92,22 106,25 110,40 L116,100 L104,103 L102,120 H42 L40,103 L28,100 Z" fill="#4d78a3"/><ellipse cx="73" cy="12" rx="10" ry="12" fill="#b57f62"/><path d="M66,22 L73,48 L80,22" fill="#b57f62"/><rect x="42" y="114" width="60" height="6" fill="#222"/></svg>
<svg class="a" style="left:240px;top:582px" width="146" height="120" viewBox="0 0 146 120"><rect width="146" height="120" rx="8" fill="#ebebed"/><rect x="26" width="90" height="120" fill="#fff"/><ellipse cx="73" cy="14" rx="11" ry="13" fill="#b57f62"/><rect x="62" y="8" width="22" height="5" fill="#111"/><path d="M38,42 C42,30 55,28 62,27 L84,27 C92,28 104,30 108,42 L110,78 L100,80 L100,115 H46 L46,80 L36,78 Z" fill="#1c2447"/><g stroke="#c9c9d6" stroke-width="2"><line x1="46" y1="60" x2="100" y2="60"/><line x1="46" y1="85" x2="100" y2="85"/><line x1="60" y1="30" x2="60" y2="115"/><line x1="86" y1="30" x2="86" y2="115"/></g><line x1="46" y1="105" x2="100" y2="105" stroke="#b0463a" stroke-width="2"/></svg>
<svg class="a" style="left:250px;top:592px" width="20" height="18" viewBox="0 0 24 22"><path d="M12 21 L2.5 11.5 A5.5 5.5 0 0 1 12 4 A5.5 5.5 0 0 1 21.5 11.5 Z" fill="#f00"/></svg>
<div class="a" style="left:45px;top:719px;font-size:8.5px;line-height:10px;color:#111">Lymio Casual Shirt for Men<br><span style="color:#aaa">Reviews(4.6 <span style="color:#f5b400">★</span>)<br>₹379</span></div>
<div class="a" style="left:242px;top:719px;font-size:8.5px;line-height:10px;color:#111">Regular Fit Checkered<br>T-Shirt<br><span style="color:#aaa">Reviews(3.1<span style="color:#f5b400">★</span>)<br>₹379</span></div>
<svg class="a" style="left:162px;top:715px" width="20" height="20" viewBox="0 0 20 20"><circle cx="10" cy="10" r="10" fill="#6c6cfd"/><path d="M10 5 V15 M5 10 H15" stroke="#fff" stroke-width="2"/></svg>
<svg class="a" style="left:361px;top:715px" width="20" height="20" viewBox="0 0 20 20"><circle cx="10" cy="10" r="10" fill="#6c6cfd"/><path d="M10 5 V15 M5 10 H15" stroke="#fff" stroke-width="2"/></svg>

<svg class="a" style="left:43px;top:803px" width="146" height="120" viewBox="0 0 146 120"><rect width="146" height="120" rx="8" fill="#ebebed"/><rect x="28" width="90" height="120" fill="#fff"/><path d="M35,40 C40,25 55,22 62,22 L84,22 C92,22 106,25 110,40 L116,100 L104,103 L102,120 H42 L40,103 L28,100 Z" fill="#4d78a3"/><ellipse cx="73" cy="12" rx="10" ry="12" fill="#b57f62"/><path d="M66,22 L73,48 L80,22" fill="#b57f62"/></svg>
<svg class="a" style="left:240px;top:803px" width="146" height="120" viewBox="0 0 146 120"><rect width="146" height="120" rx="8" fill="#ebebed"/><rect x="26" width="90" height="120" fill="#fff"/><ellipse cx="73" cy="14" rx="11" ry="13" fill="#b57f62"/><rect x="62" y="8" width="22" height="5" fill="#111"/><path d="M38,42 C42,30 55,28 62,27 L84,27 C92,28 104,30 108,42 L110,78 L100,80 L100,120 H46 L46,80 L36,78 Z" fill="#1c2447"/><g stroke="#c9c9d6" stroke-width="2"><line x1="46" y1="60" x2="100" y2="60"/><line x1="46" y1="85" x2="100" y2="85"/><line x1="60" y1="30" x2="60" y2="120"/><line x1="86" y1="30" x2="86" y2="120"/></g></svg>
<svg class="a" style="left:250px;top:813px" width="20" height="18" viewBox="0 0 24 22"><path d="M12 21 L2.5 11.5 A5.5 5.5 0 0 1 12 4 A5.5 5.5 0 0 1 21.5 11.5 Z" fill="#f00"/></svg>

<div class="a" style="left:0;top:885px;width:430px;height:47px;background:#fff;border-radius:16px 16px 0 0"></div>
<svg class="a" style="left:27px;top:897px" width="22" height="22" viewBox="0 0 22 22" fill="#c8c8cc"><rect width="10" height="10"/><rect x="12" width="10" height="10"/><rect y="12" width="10" height="10"/><rect x="12" y="12" width="10" height="10"/></svg>
<svg class="a" style="left:111px;top:896px" width="26" height="24" viewBox="0 0 24 22"><path d="M12 21 L2.5 11.5 A5.5 5.5 0 0 1 12 4 A5.5 5.5 0 0 1 21.5 11.5 Z" fill="#c8c8cc"/></svg>
<svg class="a" style="left:200px;top:895px" width="24" height="24" viewBox="0 0 24 24" fill="#6c6cfd"><path d="M12 2 L1 12 H4 V22 H10 V16 H14 V22 H20 V12 H23 Z"/></svg>
<svg class="a" style="left:290px;top:895px" width="22" height="24" viewBox="0 0 22 24" fill="#c8c8cc"><path d="M2 9 H20 L21 23 H1 Z"/><path d="M6 9 V6 a5 5 0 0 1 10 0 V9" fill="none" stroke="#c8c8cc" stroke-width="2"/></svg>
<svg class="a" style="left:378px;top:896px" width="23" height="23" viewBox="0 0 24 24"><circle cx="12" cy="12" r="11" fill="#c8c8cc"/><circle cx="12" cy="9" r="4" fill="#fff"/><path d="M5 19 a7 5 0 0 1 14 0" fill="#fff"/></svg>
</div>
</body></html>
